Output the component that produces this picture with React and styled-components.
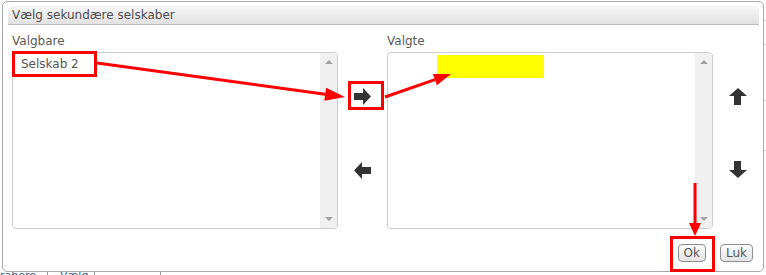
import React from "react";
import styled, { createGlobalStyle } from "styled-components";

const Global = createGlobalStyle`
  html, body { margin: 0; padding: 0; background: #fff; }
  body { font-family: "DejaVu Sans", Verdana, sans-serif; }
`;

const Page = styled.div`
  position: relative;
  width: 766px;
  height: 275px;
  overflow: hidden;
  box-sizing: border-box;
  padding: 1px 2px 2px 2px;
  background: #fff;
`;

const Backdrop = styled.div`
  position: absolute;
  inset: 0;
  z-index: 0;
`;

const BackTabs = styled.div`
  position: absolute;
  left: 0;
  bottom: -9px;
  display: flex;
  height: 14px;
  font-size: 11px;
  color: #3a5a8a;
`;

const BackTab = styled.div`
  width: ${(p) => p.$w}px;
  border-right: 1px solid #999;
  padding-left: ${(p) => p.$pl}px;
  box-sizing: border-box;
  line-height: 12px;
  white-space: nowrap;
  overflow: hidden;
`;

const BackLine = styled.div`
  position: absolute;
  right: 0;
  top: ${(p) => p.$top}px;
  width: 3px;
  height: 1px;
  background: #ccc;
`;

const Dialog = styled.div`
  position: relative;
  z-index: 1;
  box-sizing: border-box;
  height: 271px;
  width: 762px;
  border: 1px solid #a9a9a9;
  border-radius: 5px;
  background: #fff;
  padding: 4px 4px 0 5px;
  display: flex;
  flex-direction: column;
`;

const TitleBar = styled.div`
  height: 19px;
  box-sizing: border-box;
  border-bottom: 1px solid #b9b9b9;
  border-radius: 4px 4px 0 0;
  background: linear-gradient(#f7f7f7, #e1e1e1);
  padding-left: 4px;
  font-size: 12px;
  line-height: 19px;
  color: #4d4d4d;
`;

const Body = styled.div`
  display: grid;
  grid-template-columns: 326px 49px 326px 1fr;
  padding: 10px 0 0 4px;
`;

const Label = styled.div`
  font-size: 12px;
  line-height: 13px;
  color: #5a5a5a;
  margin-bottom: 4px;
`;

const ListColumn = styled.div`
  display: flex;
  flex-direction: column;
`;

const ListBox = styled.div`
  position: relative;
  height: 177px;
  box-sizing: border-box;
  border: 1px solid #cdcdcd;
  border-radius: 4px;
  background: #fff;
  display: flex;
  overflow: hidden;
`;

const ListItems = styled.div`
  flex: 1;
`;

const ListItem = styled.div`
  padding: 4px 8px;
  font-size: 12px;
  line-height: 15px;
  color: #555;
`;

const Scrollbar = styled.div`
  width: 17px;
  background: #f0f0f0;
  display: flex;
  flex-direction: column;
  justify-content: space-between;
  align-items: center;
  padding: 7px 0 7px;
`;

const Tri = styled.div`
  width: 0;
  height: 0;
  border-left: 4px solid transparent;
  border-right: 4px solid transparent;
  ${(p) =>
    p.$down
      ? "border-top: 4px solid #a3a3a3;"
      : "border-bottom: 4px solid #a3a3a3;"}
`;

const Redacted = styled.div`
  position: absolute;
  left: 49px;
  top: 2px;
  width: 107px;
  height: 23px;
  background: #ffff00;
`;

const ArrowColumn = styled.div`
  display: flex;
  flex-direction: column;
  align-items: center;
  padding-top: ${(p) => p.$top}px;
  gap: ${(p) => p.$gap}px;
  padding-left: ${(p) => p.$shift || 0}px;
`;

const IconButton = styled.div`
  width: 26px;
  height: 26px;
  display: flex;
  align-items: center;
  justify-content: center;
  color: #333;
`;

const Footer = styled.div`
  display: flex;
  justify-content: flex-end;
  gap: 14px;
  padding: 15px 6px 0 0;
`;

const Button = styled.div`
  height: 18px;
  box-sizing: border-box;
  padding: 0 5px;
  border: 1px solid #8e8e8e;
  border-radius: 4px;
  background: linear-gradient(#fbfbfb, #e4e4e4);
  font-size: 12px;
  line-height: 16px;
  color: #555;
`;

const Overlay = styled.svg`
  position: absolute;
  left: 0;
  top: 0;
  z-index: 2;
  pointer-events: none;
`;

const Arrow = ({ dir }) => {
  const paths = {
    right: "M0 5 H9 V0 L17 8.5 L9 17 V12 H0 Z",
    left: "M17 5 H8 V0 L0 8.5 L8 17 V12 H17 Z",
    up: "M5 17 V8 H0 L9 0 L18 8 H12 V17 Z",
    down: "M5 0 V9 H0 L9 17 L18 9 H12 V0 Z",
  };
  const vertical = dir === "up" || dir === "down";
  return (
    <svg width={vertical ? 18 : 17} height={17} viewBox={vertical ? "0 0 18 17" : "0 0 17 17"}>
      <path d={paths[dir]} fill="#333" />
    </svg>
  );
};

const head = (x1, y1, x2, y2, len, half) => {
  const dx = x2 - x1;
  const dy = y2 - y1;
  const l = Math.hypot(dx, dy);
  const ux = dx / l;
  const uy = dy / l;
  const bx = x2 - ux * len;
  const by = y2 - uy * len;
  const px = -uy;
  const py = ux;
  return {
    pts: `${x2},${y2} ${bx + px * half},${by + py * half} ${bx - px * half},${by - py * half}`,
    bx,
    by,
  };
};

const RedArrow = ({ x1, y1, x2, y2, len = 18, half = 6.5 }) => {
  const h = head(x1, y1, x2, y2, len, half);
  return (
    <g>
      <line x1={x1} y1={y1} x2={h.bx} y2={h.by} stroke="#f00" strokeWidth="3" />
      <polygon points={h.pts} fill="#f00" />
    </g>
  );
};

export default function App() {
  return (
    <>
      <Global />
      <Page>
        <Backdrop>
          <BackTabs>
            <BackTab $w={48} $pl={0}>rabere</BackTab>
            <BackTab $w={47} $pl={12}>Vælg</BackTab>
            <BackTab $w={66} $pl={0}></BackTab>
          </BackTabs>
          <BackLine $top={20} />
          <BackLine $top={44} />
          <BackLine $top={100} />
          <BackLine $top={150} />
        </Backdrop>
        <Dialog>
          <TitleBar>Vælg sekundære selskaber</TitleBar>
          <Body>
            <ListColumn>
              <Label>Valgbare</Label>
              <ListBox>
                <ListItems>
                  <ListItem>Selskab 2</ListItem>
                </ListItems>
                <Scrollbar>
                  <Tri />
                  <Tri $down />
                </Scrollbar>
              </ListBox>
            </ListColumn>
            <ArrowColumn $top={48} $gap={48}>
              <IconButton>
                <Arrow dir="right" />
              </IconButton>
              <IconButton>
                <Arrow dir="left" />
              </IconButton>
            </ArrowColumn>
            <ListColumn>
              <Label>Valgte</Label>
              <ListBox>
                <ListItems />
                <Redacted />
                <Scrollbar>
                  <Tri />
                  <Tri $down />
                </Scrollbar>
              </ListBox>
            </ListColumn>
            <ArrowColumn $top={48} $gap={47} $shift={4}>
              <IconButton>
                <Arrow dir="up" />
              </IconButton>
              <IconButton>
                <Arrow dir="down" />
              </IconButton>
            </ArrowColumn>
          </Body>
          <Footer>
            <Button>Ok</Button>
            <Button>Luk</Button>
          </Footer>
        </Dialog>
        <Overlay width="766" height="275" viewBox="0 0 766 275">
          <rect x="13.5" y="52.5" width="82" height="23" fill="none" stroke="#f00" strokeWidth="3" />
          <rect x="349.5" y="82.5" width="33" height="26" fill="none" stroke="#f00" strokeWidth="3" />
          <rect x="671.5" y="237.5" width="42" height="33" fill="none" stroke="#f00" strokeWidth="3" />
          <RedArrow x1={97} y1={63} x2={345} y2={97} len={20} half={6.5} />
          <RedArrow x1={385} y1={97} x2={451} y2={74} len={17} half={6} />
          <RedArrow x1={695} y1={183} x2={695} y2={236} len={13} half={6} />
        </Overlay>
      </Page>
    </>
  );
}
